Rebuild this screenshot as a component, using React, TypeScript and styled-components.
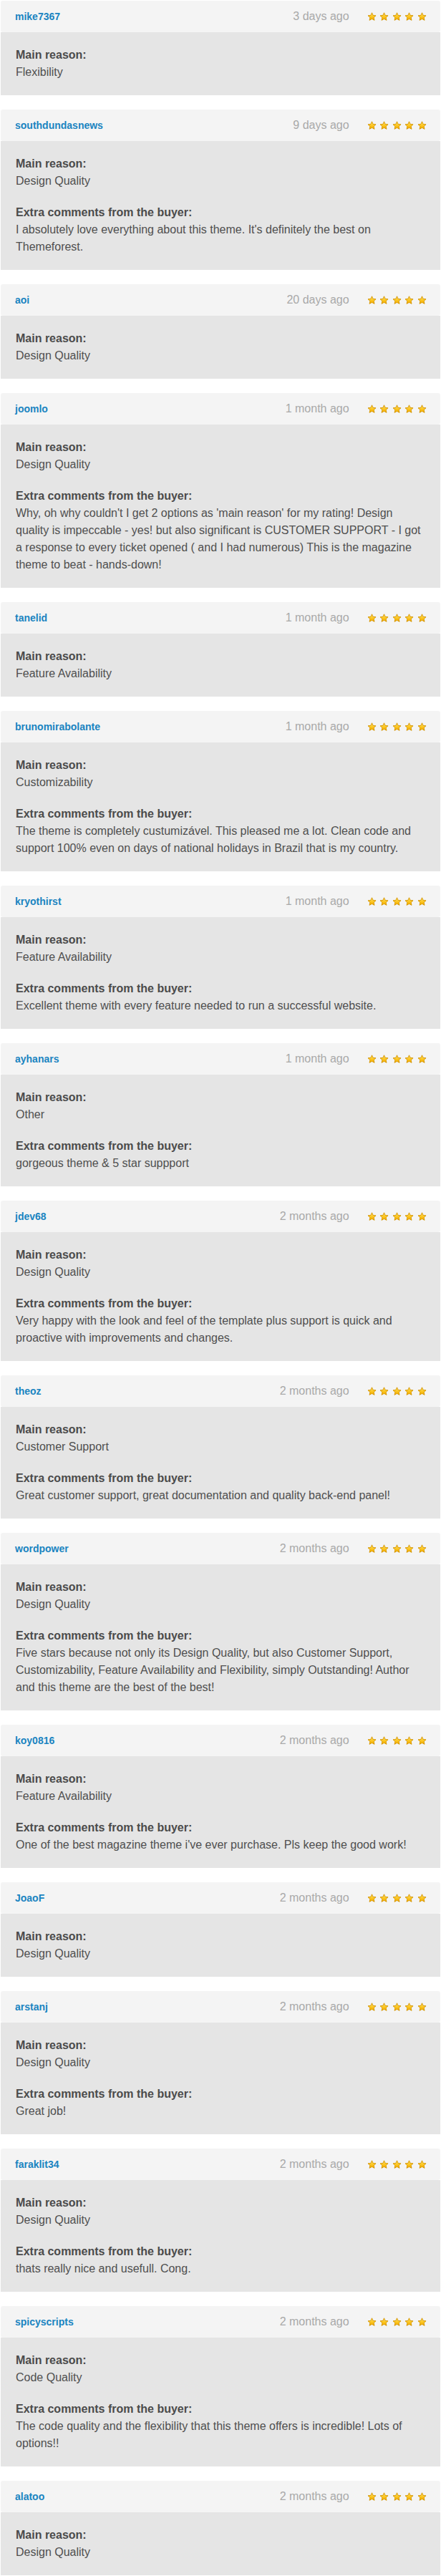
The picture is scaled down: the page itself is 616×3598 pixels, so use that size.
import styled, { createGlobalStyle } from "styled-components";

type Review = {
  user: string;
  when: string;
  reason: string;
  comment?: string;
};

const reviews: Review[] = [
  { user: "mike7367", when: "3 days ago", reason: "Flexibility" },
  {
    user: "southdundasnews",
    when: "9 days ago",
    reason: "Design Quality",
    comment:
      "I absolutely love everything about this theme. It's definitely the best on Themeforest.",
  },
  { user: "aoi", when: "20 days ago", reason: "Design Quality" },
  {
    user: "joomlo",
    when: "1 month ago",
    reason: "Design Quality",
    comment:
      "Why, oh why couldn't I get 2 options as 'main reason' for my rating! Design quality is impeccable - yes! but also significant is CUSTOMER SUPPORT - I got a response to every ticket opened ( and I had numerous) This is the magazine theme to beat - hands-down!",
  },
  { user: "tanelid", when: "1 month ago", reason: "Feature Availability" },
  {
    user: "brunomirabolante",
    when: "1 month ago",
    reason: "Customizability",
    comment:
      "The theme is completely custumizável. This pleased me a lot. Clean code and support 100% even on days of national holidays in Brazil that is my country.",
  },
  {
    user: "kryothirst",
    when: "1 month ago",
    reason: "Feature Availability",
    comment:
      "Excellent theme with every feature needed to run a successful website.",
  },
  {
    user: "ayhanars",
    when: "1 month ago",
    reason: "Other",
    comment: "gorgeous theme & 5 star suppport",
  },
  {
    user: "jdev68",
    when: "2 months ago",
    reason: "Design Quality",
    comment:
      "Very happy with the look and feel of the template plus support is quick and proactive with improvements and changes.",
  },
  {
    user: "theoz",
    when: "2 months ago",
    reason: "Customer Support",
    comment:
      "Great customer support, great documentation and quality back-end panel!",
  },
  {
    user: "wordpower",
    when: "2 months ago",
    reason: "Design Quality",
    comment:
      "Five stars because not only its Design Quality, but also Customer Support, Customizability, Feature Availability and Flexibility, simply Outstanding! Author and this theme are the best of the best!",
  },
  {
    user: "koy0816",
    when: "2 months ago",
    reason: "Feature Availability",
    comment:
      "One of the best magazine theme i've ever purchase. Pls keep the good work!",
  },
  { user: "JoaoF", when: "2 months ago", reason: "Design Quality" },
  {
    user: "arstanj",
    when: "2 months ago",
    reason: "Design Quality",
    comment: "Great job!",
  },
  {
    user: "faraklit34",
    when: "2 months ago",
    reason: "Design Quality",
    comment: "thats really nice and usefull. Cong.",
  },
  {
    user: "spicyscripts",
    when: "2 months ago",
    reason: "Code Quality",
    comment:
      "The code quality and the flexibility that this theme offers is incredible! Lots of options!!",
  },
  { user: "alatoo", when: "2 months ago", reason: "Design Quality" },
];

const GlobalStyle = createGlobalStyle`
  html, body {
    margin: 0;
    padding: 0;
    background: #fff;
  }
  body {
    font-family: "Liberation Sans", Arial, Helvetica, sans-serif;
    -webkit-font-smoothing: antialiased;
  }
`;

const List = styled.div`
  display: flex;
  flex-direction: column;
  gap: 20px;
  padding: 1px 1px 0;
`;

const Card = styled.article`
  display: flex;
  flex-direction: column;
`;

const Header = styled.header`
  height: 44px;
  display: flex;
  align-items: center;
  padding: 0 19px 0 20px;
  background: #f4f4f4;
  border-radius: 3px;
`;

const User = styled.a`
  flex-grow: 1;
  font-size: 14px;
  font-weight: bold;
  color: #1a84c1;
  text-decoration: none;
  cursor: pointer;
`;

const When = styled.span`
  font-size: 16px;
  color: #a9a9a9;
  margin-right: 25px;
`;

const Stars = styled.div`
  display: flex;
  gap: 4.6px;
  padding-top: 1px;
`;

const Body = styled.div`
  background: #e5e5e5;
  padding: 20px 21px;
  display: flex;
  flex-direction: column;
  gap: 20px;
  color: #4f4f4f;
  font-size: 16px;
  line-height: 24px;
`;

const Section = styled.div`
  display: flex;
  flex-direction: column;
`;

const Label = styled.strong`
  font-weight: bold;
  color: #4b4b4b;
`;

const Text = styled.p`
  margin: 0;
`;

const Star = () => (
  <svg width="13" height="13" viewBox="0 0 26 26">
    <defs>
      <linearGradient id="starFill" x1="0" y1="0" x2="0" y2="1">
        <stop offset="0" stopColor="#ffe46a" />
        <stop offset="0.55" stopColor="#fcc51e" />
        <stop offset="1" stopColor="#f2a900" />
      </linearGradient>
    </defs>
    <path
      d="M13 1.6l3.3 7.2 7.8.8-5.8 5.3 1.7 7.8L13 18.8l-6.9 3.9 1.7-7.8-5.8-5.3 7.8-.8z"
      fill="url(#starFill)"
      stroke="#d39300"
      strokeWidth="1.8"
      strokeLinejoin="round"
    />
  </svg>
);

const ReviewCard = ({ review }: { review: Review }) => (
  <Card>
    <Header>
      <User>{review.user}</User>
      <When>{review.when}</When>
      <Stars>
        {[0, 1, 2, 3, 4].map((i) => (
          <Star key={i} />
        ))}
      </Stars>
    </Header>
    <Body>
      <Section>
        <Label>Main reason:</Label>
        <Text>{review.reason}</Text>
      </Section>
      {review.comment && (
        <Section>
          <Label>Extra comments from the buyer:</Label>
          <Text>{review.comment}</Text>
        </Section>
      )}
    </Body>
  </Card>
);

const App = () => (
  <>
    <GlobalStyle />
    <List>
      {reviews.map((r) => (
        <ReviewCard key={r.user} review={r} />
      ))}
    </List>
  </>
);

export default App;
